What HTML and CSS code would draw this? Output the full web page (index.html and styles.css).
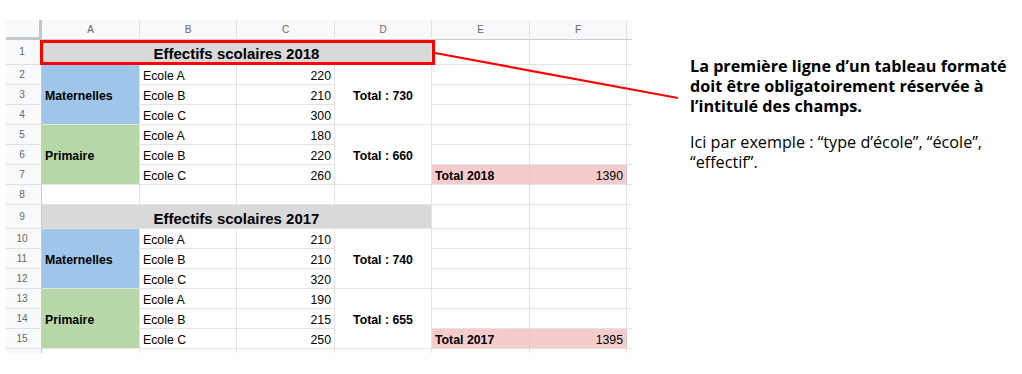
FILE: index.html
```html
<!DOCTYPE html>
<html lang="fr">
<head>
<meta charset="utf-8">
<title>Effectifs scolaires</title>
<link rel="stylesheet" href="styles.css">
</head>
<body>
<div class="page">
  <div class="sheet-wrap">
    <div class="sheet">
      <!-- header -->
      <div class="corner"></div>
      <div class="colh">A</div>
      <div class="colh">B</div>
      <div class="colh">C</div>
      <div class="colh">D</div>
      <div class="colh">E</div>
      <div class="colh">F</div>
      <div class="colh edge"></div>

      <!-- row 1 -->
      <div class="rowh">1</div>
      <div class="c title span4">Effectifs scolaires 2018</div>
      <div class="c"></div><div class="c"></div><div class="c edge"></div>

      <!-- row 2 -->
      <div class="rowh">2</div>
      <div class="c blue span3 mid bold">Maternelles</div>
      <div class="c">Ecole A</div>
      <div class="c num">220</div>
      <div class="c span3 mid bold center">Total : 730</div>
      <div class="c"></div><div class="c"></div><div class="c edge"></div>
      <!-- row 3 -->
      <div class="rowh">3</div>
      <div class="c">Ecole B</div>
      <div class="c num">210</div>
      <div class="c"></div><div class="c"></div><div class="c edge"></div>
      <!-- row 4 -->
      <div class="rowh">4</div>
      <div class="c">Ecole C</div>
      <div class="c num">300</div>
      <div class="c"></div><div class="c"></div><div class="c edge"></div>

      <!-- row 5 -->
      <div class="rowh">5</div>
      <div class="c green span3 mid bold">Primaire</div>
      <div class="c">Ecole A</div>
      <div class="c num">180</div>
      <div class="c span3 mid bold center">Total : 660</div>
      <div class="c"></div><div class="c"></div><div class="c edge"></div>
      <!-- row 6 -->
      <div class="rowh">6</div>
      <div class="c">Ecole B</div>
      <div class="c num">220</div>
      <div class="c"></div><div class="c"></div><div class="c edge"></div>
      <!-- row 7 -->
      <div class="rowh">7</div>
      <div class="c">Ecole C</div>
      <div class="c num">260</div>
      <div class="c pink bold">Total 2018</div>
      <div class="c pink num">1390</div>
      <div class="c edge"></div>

      <!-- row 8 -->
      <div class="rowh">8</div>
      <div class="c"></div><div class="c"></div><div class="c"></div><div class="c"></div>
      <div class="c"></div><div class="c"></div><div class="c edge"></div>

      <!-- row 9 -->
      <div class="rowh">9</div>
      <div class="c title span4">Effectifs scolaires 2017</div>
      <div class="c"></div><div class="c"></div><div class="c edge"></div>

      <!-- row 10 -->
      <div class="rowh">10</div>
      <div class="c blue span3 mid bold">Maternelles</div>
      <div class="c">Ecole A</div>
      <div class="c num">210</div>
      <div class="c span3 mid bold center">Total : 740</div>
      <div class="c"></div><div class="c"></div><div class="c edge"></div>
      <!-- row 11 -->
      <div class="rowh">11</div>
      <div class="c">Ecole B</div>
      <div class="c num">210</div>
      <div class="c"></div><div class="c"></div><div class="c edge"></div>
      <!-- row 12 -->
      <div class="rowh">12</div>
      <div class="c">Ecole C</div>
      <div class="c num">320</div>
      <div class="c"></div><div class="c"></div><div class="c edge"></div>

      <!-- row 13 -->
      <div class="rowh">13</div>
      <div class="c green span3 mid bold">Primaire</div>
      <div class="c">Ecole A</div>
      <div class="c num">190</div>
      <div class="c span3 mid bold center">Total : 655</div>
      <div class="c"></div><div class="c"></div><div class="c edge"></div>
      <!-- row 14 -->
      <div class="rowh">14</div>
      <div class="c">Ecole B</div>
      <div class="c num">215</div>
      <div class="c"></div><div class="c"></div><div class="c edge"></div>
      <!-- row 15 -->
      <div class="rowh">15</div>
      <div class="c">Ecole C</div>
      <div class="c num">250</div>
      <div class="c pink bold">Total 2017</div>
      <div class="c pink num">1395</div>
      <div class="c edge"></div>

      <!-- partial row 16 -->
      <div class="rowh last"></div>
      <div class="c last"></div><div class="c last"></div><div class="c last"></div><div class="c last"></div>
      <div class="c last"></div><div class="c last"></div><div class="c edge last"></div>
    </div>
    <div class="highlight"></div>
  </div>

  <div class="note">
    <p class="note-title">La première ligne d’un tableau formaté<br>doit être obligatoirement réservée à<br>l’intitulé des champs.</p>
    <p class="note-body">Ici par exemple : “type d’école”, “école”,<br>“effectif”.</p>
  </div>

  <svg class="pointer" width="1022" height="374" viewBox="0 0 1022 374" aria-hidden="true">
    <line x1="435" y1="53" x2="678" y2="98" stroke="#ff0000" stroke-width="2.2"/>
  </svg>
</div>
</body>
</html>
```

FILE: styles.css
```css
html, body {
  margin: 0;
  padding: 0;
  background: #ffffff;
}

.page {
  position: relative;
  width: 1022px;
  height: 374px;
  display: flex;
  align-items: flex-start;
  padding: 20px 0 0 6px;
  box-sizing: border-box;
  overflow: hidden;
}

.sheet-wrap {
  position: relative;
  flex: none;
}

.sheet {
  display: grid;
  grid-template-columns: 36px 98px 97px 98px 97px 98px 97px 5px;
  grid-template-rows: 20px 25px repeat(7, 20px) 24px repeat(6, 20px) 4px;
  font-family: "Liberation Sans", Arial, sans-serif;
  font-size: 12.3px;
  line-height: 14px;
  color: #000;
}

.corner {
  background: #f8f9fa;
  border-right: 3px solid #c4c7c9;
  border-bottom: 3px solid #c4c7c9;
}

.colh {
  background: #f8f9fa;
  border-right: 1px solid #e0e1e2;
  border-bottom: 1px solid #c9cbcd;
  display: flex;
  align-items: center;
  justify-content: center;
  font-size: 10px;
  color: #666;
}

.rowh {
  background: #f8f9fa;
  border-right: 1px solid #c9cbcd;
  border-bottom: 1px solid #e0e1e2;
  display: flex;
  align-items: center;
  justify-content: center;
  font-size: 10px;
  color: #666;
  padding-right: 3px;
}

.c {
  border-right: 1px solid #e2e3e3;
  border-bottom: 1px solid #e2e3e3;
  display: flex;
  align-items: flex-end;
  padding: 0 3px 1px 3px;
  white-space: nowrap;
  overflow: hidden;
}

.edge {
  border-right: none;
  padding: 0;
}

.last {
  border-bottom: none;
}

.colh.edge {
  border-right: none;
}

.num {
  justify-content: flex-end;
}

.center {
  justify-content: center;
}

.bold {
  font-weight: 700;
}

.mid {
  align-items: center;
  padding-top: 2px;
  padding-bottom: 0;
}

.span3 {
  grid-row: span 3;
}

.span4 {
  grid-column: span 4;
}

.title {
  background: #d9d9d9;
  font-weight: 700;
  font-size: 15px;
  line-height: 17px;
  justify-content: center;
  align-items: center;
  padding-top: 3px;
  padding-bottom: 0;
}

.blue { background: #9fc5e8; }
.green { background: #b6d7a8; }
.pink { background: #f4cccc; border-right-color: #e8c3c3; }

.highlight {
  position: absolute;
  left: 34px;
  top: 20px;
  width: 395px;
  height: 25px;
  border: 3px solid #ff0000;
  box-sizing: border-box;
}

.note {
  margin: 36px 0 0 58px;
  font-family: "Open Sans", "Liberation Sans", sans-serif;
  font-size: 16.2px;
  line-height: 20px;
  color: #000;
  white-space: nowrap;
}

.note p {
  margin: 0;
}

.note-title {
  font-weight: 700;
}

.note-body {
  margin-top: 16px !important;
}

.pointer {
  position: absolute;
  left: 0;
  top: 0;
  pointer-events: none;
}
```
